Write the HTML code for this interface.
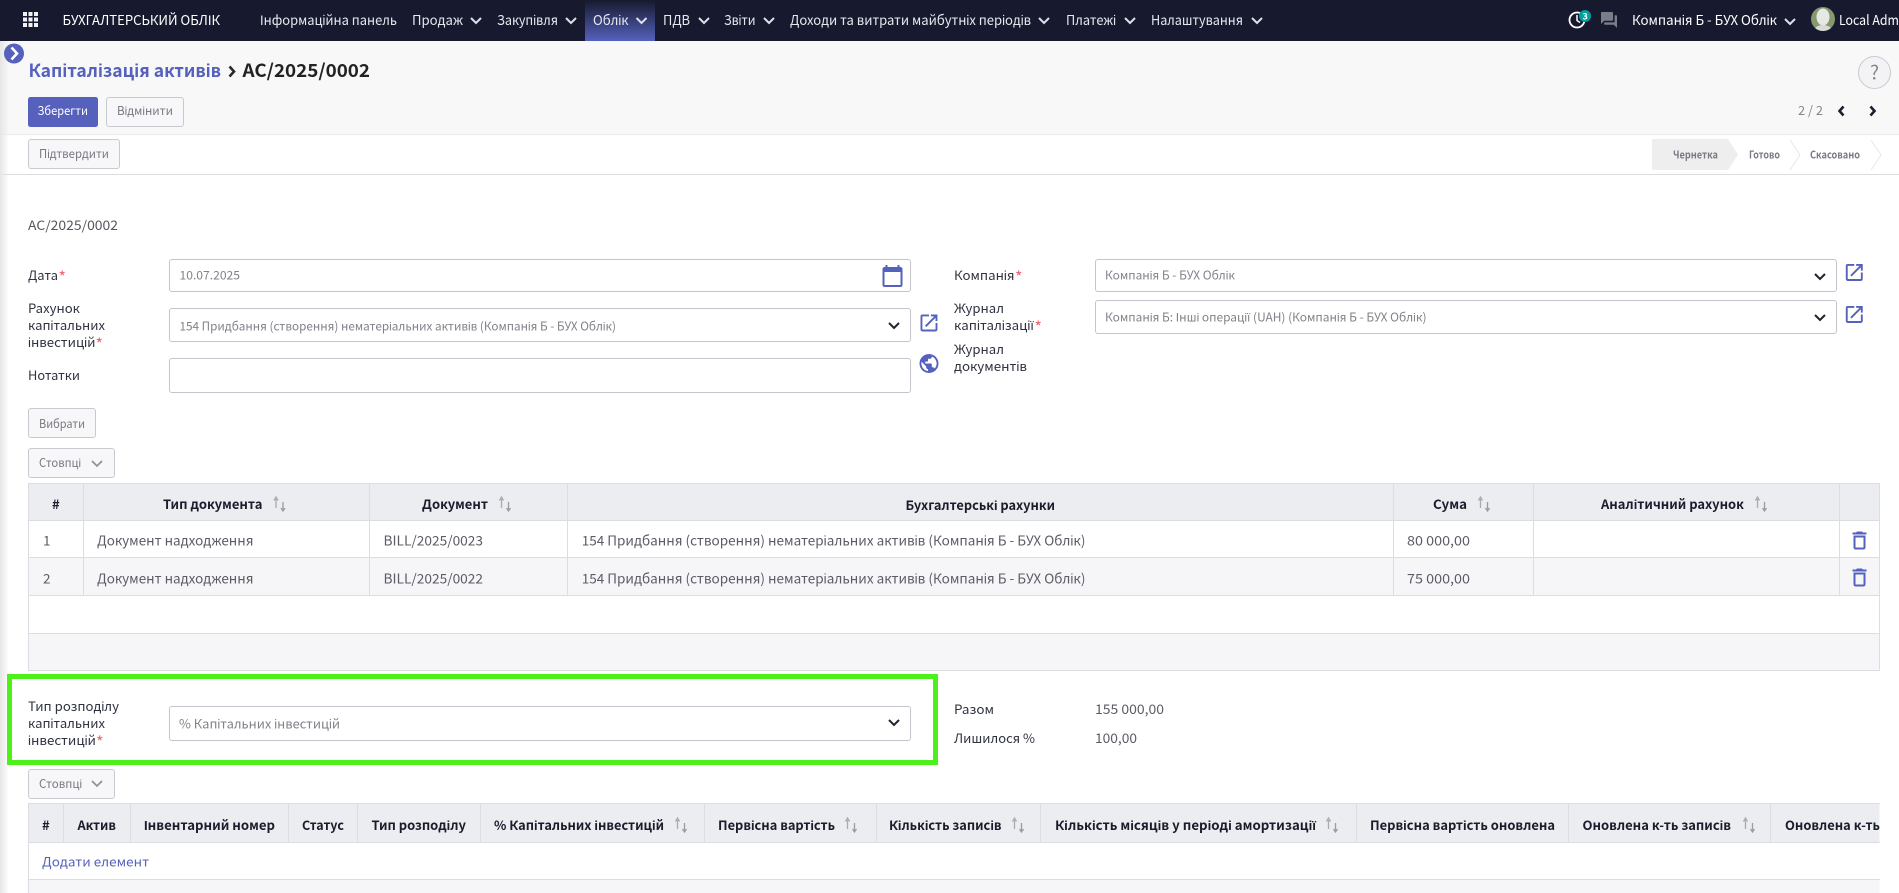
<!DOCTYPE html>
<html lang="uk">
<head>
<meta charset="utf-8">
<title>Капіталізація активів</title>
<style>
html,body{margin:0;padding:0;background:#fff;width:1899px;height:893px;overflow:hidden}
svg{display:block}
text{font-family:"Noto Sans CJK KR","Liberation Sans",sans-serif;font-size:13px;fill:#4a4d57;white-space:pre}
.n{fill:#e6e8f0;font-size:13.5px}
.l{fill:#2f3340;font-size:13px}
.v{fill:#80828a;font-size:12px}
.c{fill:#5a5c66;font-size:13.5px}
.h{fill:#1a1c2c;font-weight:700;font-size:13px}
.b{fill:#777982;font-size:12px}
.s{fill:#787a86;font-size:10.5px;font-weight:700}
.r{fill:#f0626e;font-size:16px}
.box{fill:#fff;stroke:#c4c5cc;stroke-width:1}
.btn{fill:#f7f7f9;stroke:#c9cad0;stroke-width:1}
.ln{stroke:#dcdde2;stroke-width:1;fill:none}
.chv{fill:none;stroke:#dfe1ea;stroke-width:2}
.chd{fill:none;stroke:#20222e;stroke-width:2}
.chg{fill:none;stroke:#8a8c96;stroke-width:1.6}
.ic{fill:#5561bd}
</style>
</head>
<body>
<svg xmlns="http://www.w3.org/2000/svg" width="1899" height="893" viewBox="0 0 1899 893">
<defs>
<linearGradient id="act" x1="0" y1="0" x2="0" y2="1"><stop offset="0" stop-color="#171a2e"/><stop offset="1" stop-color="#5561bd"/></linearGradient>
<linearGradient id="side" x1="0" y1="0" x2="1" y2="0"><stop offset="0" stop-color="#e6e6e6"/><stop offset="1" stop-color="#e6e6e6" stop-opacity="0"/></linearGradient>
<g id="sort"><path d="M2.5 3V12M.5 4.5L2.5 1 4.5 4.5" fill="none" stroke="#a9aab2" stroke-width="1.3"/><path d="M9.5 6V14M7.5 12L9.5 15 11.5 12" fill="none" stroke="#9a9ba3" stroke-width="1.3"/></g>
<path id="ext" class="ic" d="M19 19H5V5h7V3H5a2 2 0 0 0-2 2v14c0 1.1.9 2 2 2h14c1.1 0 2-.9 2-2v-7h-2v7zM14 3v2h3.59l-9.83 9.83 1.41 1.41L19 6.41V10h2V3h-7z"/>
<path id="trash" class="ic" d="M6 19c0 1.1.9 2 2 2h8c1.1 0 2-.9 2-2V7H6v12zM8 9h8v10H8V9zm7.5-5l-1-1h-5l-1 1H5v2h14V4h-3.5z"/>
<clipPath id="clipT"><rect x="28" y="803" width="1851.5" height="90"/></clipPath>
<clipPath id="av"><ellipse cx="1823" cy="19" rx="12" ry="12"/></clipPath>
</defs>

<!-- page backgrounds -->
<rect x="0" y="41" width="1899" height="93" fill="#f8f8f8"/>
<rect x="0" y="134" width="1899" height="40" fill="#fff"/>
<rect x="0" y="134" width="1899" height="1" fill="#ececec"/>
<rect x="0" y="174" width="1899" height="1" fill="#dcdcdc"/>
<rect x="0" y="41" width="9" height="852" fill="url(#side)"/>

<!-- navbar -->
<rect x="0" y="0" width="1899" height="41" fill="#171a2e"/>
<rect x="585" y="0" width="70" height="41" fill="url(#act)"/>
<g fill="#f2f2f6">
<rect x="23" y="12" width="4" height="4"/><rect x="28.5" y="12" width="4" height="4"/><rect x="34" y="12" width="4" height="4"/>
<rect x="23" y="17.5" width="4" height="4"/><rect x="28.5" y="17.5" width="4" height="4"/><rect x="34" y="17.5" width="4" height="4"/>
<rect x="23" y="23" width="4" height="4"/><rect x="28.5" y="23" width="4" height="4"/><rect x="34" y="23" width="4" height="4"/>
</g>
<text class="n" style="fill:#fff" x="62.5" y="25" textLength="157.5" lengthAdjust="spacingAndGlyphs">БУХГАЛТЕРСЬКИЙ ОБЛІК</text>
<text class="n" x="260" y="25" textLength="137" lengthAdjust="spacingAndGlyphs">Інформаційна панель</text>
<text class="n" x="412" y="25" textLength="51" lengthAdjust="spacingAndGlyphs">Продаж</text>
<text class="n" x="497" y="25" textLength="61" lengthAdjust="spacingAndGlyphs">Закупівля</text>
<text class="n" x="593" y="25" textLength="35.6" lengthAdjust="spacingAndGlyphs">Облік</text>
<text class="n" x="663" y="25" textLength="27" lengthAdjust="spacingAndGlyphs">ПДВ</text>
<text class="n" x="724" y="25" textLength="31.5" lengthAdjust="spacingAndGlyphs">Звіти</text>
<text class="n" x="790" y="25" textLength="241" lengthAdjust="spacingAndGlyphs">Доходи та витрати майбутніх періодів</text>
<text class="n" x="1066" y="25" textLength="50" lengthAdjust="spacingAndGlyphs">Платежі</text>
<text class="n" x="1151" y="25" textLength="92" lengthAdjust="spacingAndGlyphs">Налаштування</text>
<path class="chv" d="M471 18l5 5 5-5M566 18l5 5 5-5M636.5 18l5 5 5-5M699 18l5 5 5-5M764 18l5 5 5-5M1039 18l5 5 5-5M1125 18l5 5 5-5M1252 18l5 5 5-5M1785 19l5 5 5-5"/>

<circle cx="1577" cy="20" r="7.5" fill="none" stroke="#fff" stroke-width="1.8"/>
<path d="M1577 15v5.5l3 2" fill="none" stroke="#fff" stroke-width="1.5"/>
<circle cx="1585" cy="16" r="6" fill="#00a09d"/>
<text x="1582.5" y="19.5" style="fill:#fff;font-size:9px;font-weight:700">3</text>
<path transform="translate(1599.4,10.4) scale(.8)" fill="#7c7d8a" d="M21 6h-2v9H6v2c0 .55.45 1 1 1h11l4 4V7c0-.55-.45-1-1-1zm-4 6V3c0-.55-.45-1-1-1H3c-.55 0-1 .45-1 1v14l4-4h10c.55 0 1-.45 1-1z"/>
<text class="n" style="fill:#fff" x="1632" y="25" textLength="145" lengthAdjust="spacingAndGlyphs">Компанія Б - БУХ Облік</text>
<g clip-path="url(#av)">
<rect x="1811" y="7" width="24" height="24" fill="#84996c"/>
<ellipse cx="1823" cy="17" rx="6.5" ry="8.5" fill="#e6e8e6"/>
<ellipse cx="1823" cy="31" rx="9" ry="6" fill="#d8dad8"/>
</g>
<text class="n" style="fill:#fff" x="1839" y="25" textLength="60" lengthAdjust="spacingAndGlyphs">Local Adm</text>

<!-- sidebar toggle -->
<circle cx="14" cy="53.5" r="10" fill="#5561bd"/>
<path d="M11.5 47.5l5.5 6-5.5 6" fill="none" stroke="#fff" stroke-width="2.6"/>

<!-- control panel -->
<text style="fill:#5561bd;font-size:18px;font-weight:700" x="28.5" y="77" textLength="192.5" lengthAdjust="spacingAndGlyphs">Капіталізація активів</text>
<path d="M229.5 66.5l4.5 5-4.5 5" fill="none" stroke="#2a2a2a" stroke-width="2.6"/>
<text style="fill:#222;font-size:18px;font-weight:700" x="242.5" y="77" textLength="127.5" lengthAdjust="spacingAndGlyphs">AC/2025/0002</text>

<rect x="28" y="97" width="70" height="30" rx="2.5" fill="#5561bd"/>
<text style="fill:#fff;font-size:12px" x="37.5" y="115" textLength="50.5" lengthAdjust="spacingAndGlyphs">Зберегти</text>
<rect class="btn" x="106.5" y="97.5" width="77" height="29" rx="2.5"/>
<text class="b" x="117" y="115" textLength="56" lengthAdjust="spacingAndGlyphs">Відмінити</text>

<circle cx="1874.5" cy="72.5" r="16" fill="#f3f3f5" stroke="#c9cad0"/>
<text style="fill:#85868e;font-size:19px" x="1870" y="79.5">?</text>
<text style="fill:#85868e;font-size:12.5px" x="1798" y="115" textLength="25" lengthAdjust="spacingAndGlyphs">2 / 2</text>
<path d="M1843.5 106.5l-4 4.5 4 4.5M1870.5 106.5l4 4.5-4 4.5" fill="none" stroke="#1c1e2e" stroke-width="2.6"/>

<!-- status bar -->
<rect class="btn" x="28.5" y="139.5" width="91" height="29" rx="2.5"/>
<text class="b" x="39" y="158" textLength="70" lengthAdjust="spacingAndGlyphs">Підтвердити</text>
<path d="M1654 139H1728L1738 154.5 1728 170H1654a2 2 0 0 1-2-2V141a2 2 0 0 1 2-2z" fill="#eeeeee"/>
<path d="M1790 140l10 15-10 15M1871 140l10 15-10 15" fill="none" stroke="#e6e7ea"/>
<text class="s" x="1673" y="158.5" textLength="45" lengthAdjust="spacingAndGlyphs">Чернетка</text>
<text class="s" x="1749" y="158.5" textLength="31" lengthAdjust="spacingAndGlyphs">Готово</text>
<text class="s" x="1810" y="158.5" textLength="50" lengthAdjust="spacingAndGlyphs">Скасовано</text>

<!-- form -->
<text class="l" style="fill:#55575f" x="28" y="230" textLength="90" lengthAdjust="spacingAndGlyphs">AC/2025/0002</text>

<text class="l" x="28" y="280" textLength="30" lengthAdjust="spacingAndGlyphs">Дата</text><text class="r" x="58.5" y="283">*</text>
<rect class="box" x="169.5" y="259.5" width="741" height="32" rx="2.5"/>
<text class="v" x="179.5" y="279.5" textLength="60.5" lengthAdjust="spacingAndGlyphs">10.07.2025</text>
<path class="ic" transform="translate(880.5,264)" d="M20 3h-1V1h-2v2H7V1H5v2H4c-1.1 0-2 .9-2 2v16c0 1.1.9 2 2 2h16c1.1 0 2-.9 2-2V5c0-1.1-.9-2-2-2zm0 18H4V8h16v13z"/>

<text class="l" x="28" y="313" textLength="52" lengthAdjust="spacingAndGlyphs">Рахунок</text>
<text class="l" x="28" y="330" textLength="77" lengthAdjust="spacingAndGlyphs">капітальних</text>
<text class="l" x="28" y="347" textLength="67.5" lengthAdjust="spacingAndGlyphs">інвестицій</text><text class="r" x="95.5" y="350">*</text>
<rect class="box" x="169.5" y="308.5" width="741" height="33" rx="2.5"/>
<text class="v" x="179.5" y="330.5" textLength="436.5" lengthAdjust="spacingAndGlyphs">154 Придбання (створення) нематеріальних активів (Компанія Б - БУХ Облік)</text>
<path class="chd" d="M889 323l5 5 5-5"/>
<use href="#ext" transform="translate(917.7,311.7) scale(.94)"/>

<text class="l" x="28" y="380" textLength="52" lengthAdjust="spacingAndGlyphs">Нотатки</text>
<rect class="box" x="169.5" y="358.5" width="741" height="34" rx="2.5"/>
<path class="ic" transform="translate(917.6,352.1) scale(.95)" d="M12 2C6.48 2 2 6.48 2 12s4.48 10 10 10 10-4.48 10-10S17.52 2 12 2zm-1 17.93c-3.95-.49-7-3.85-7-7.93 0-.62.08-1.21.21-1.79L9 15v1c0 1.1.9 2 2 2v1.93zm6.9-2.54c-.26-.81-1-1.39-1.9-1.39h-1v-3c0-.55-.45-1-1-1H8v-2h2c.55 0 1-.45 1-1V7h2c1.1 0 2-.9 2-2v-.41c2.93 1.19 5 4.06 5 7.41 0 2.08-.8 3.97-2.1 5.39z"/>

<text class="l" x="954" y="280" textLength="60.5" lengthAdjust="spacingAndGlyphs">Компанія</text><text class="r" x="1015" y="283">*</text>
<rect class="box" x="1095.5" y="259.5" width="741" height="32" rx="2.5"/>
<text class="v" x="1105" y="279.5" textLength="130" lengthAdjust="spacingAndGlyphs">Компанія Б - БУХ Облік</text>
<path class="chd" d="M1815 274l5 5 5-5"/>
<use href="#ext" transform="translate(1843,261.2) scale(.94)"/>

<text class="l" x="954" y="313" textLength="50" lengthAdjust="spacingAndGlyphs">Журнал</text>
<text class="l" x="954" y="330" textLength="80" lengthAdjust="spacingAndGlyphs">капіталізації</text><text class="r" x="1034.5" y="333">*</text>
<rect class="box" x="1095.5" y="300.5" width="741" height="33" rx="2.5"/>
<text class="v" x="1105" y="321.5" textLength="321.5" lengthAdjust="spacingAndGlyphs">Компанія Б: Інші операції (UAH) (Компанія Б - БУХ Облік)</text>
<path class="chd" d="M1815 315l5 5 5-5"/>
<use href="#ext" transform="translate(1843,303.2) scale(.94)"/>

<text class="l" x="954" y="354" textLength="50" lengthAdjust="spacingAndGlyphs">Журнал</text>
<text class="l" x="954" y="371" textLength="73" lengthAdjust="spacingAndGlyphs">документів</text>

<rect class="btn" x="28.5" y="408.5" width="67" height="29" rx="2.5"/>
<text class="b" x="39" y="428" textLength="46" lengthAdjust="spacingAndGlyphs">Вибрати</text>
<rect class="btn" x="28.5" y="448.5" width="86" height="29" rx="2.5"/>
<text class="b" x="39" y="467" textLength="42" lengthAdjust="spacingAndGlyphs">Стовпці</text>
<path class="chg" d="M92 461l5 5 5-5"/>

<!-- table 1 -->
<rect x="28" y="483" width="1851.5" height="38" fill="#ecedf0"/>
<rect x="28" y="558" width="1851.5" height="37.5" fill="#f6f6f8"/>
<rect x="28" y="633" width="1851.5" height="38" fill="#f6f6f8"/>
<path class="ln" d="M28.5 483.5H1879.5V670.5H28.5ZM28 520.5H1880M28 557.5H1880M28 595.5H1880M28 633.5H1880M83.5 483V596M369.5 483V596M567.5 483V596M1393.5 483V596M1533.5 483V596M1839.5 483V596"/>
<text class="h" x="52" y="509" textLength="8">#</text>
<text class="h" x="163" y="509" textLength="99.5" lengthAdjust="spacingAndGlyphs">Тип документа</text>
<use href="#sort" x="273.5" y="496"/>
<text class="h" x="422" y="509" textLength="66" lengthAdjust="spacingAndGlyphs">Документ</text>
<use href="#sort" x="499" y="496"/>
<text class="h" x="905.5" y="510" textLength="149.5" lengthAdjust="spacingAndGlyphs">Бухгалтерські рахунки</text>
<text class="h" x="1433" y="509" textLength="34" lengthAdjust="spacingAndGlyphs">Сума</text>
<use href="#sort" x="1478" y="496"/>
<text class="h" x="1601" y="509" textLength="143" lengthAdjust="spacingAndGlyphs">Аналітичний рахунок</text>
<use href="#sort" x="1755" y="496"/>

<text class="c" x="43" y="545.5">1</text>
<text class="c" x="97" y="545.5" textLength="156.5" lengthAdjust="spacingAndGlyphs">Документ надходження</text>
<text class="c" x="383.5" y="545.5" textLength="99.5" lengthAdjust="spacingAndGlyphs">BILL/2025/0023</text>
<text class="c" x="581.7" y="545.5" textLength="503.8" lengthAdjust="spacingAndGlyphs">154 Придбання (створення) нематеріальних активів (Компанія Б - БУХ Облік)</text>
<text class="c" x="1407" y="545.5" textLength="63" lengthAdjust="spacingAndGlyphs">80 000,00</text>
<use href="#trash" transform="translate(1847.5,528.5)"/>

<text class="c" x="43" y="583.5">2</text>
<text class="c" x="97" y="583.5" textLength="156.5" lengthAdjust="spacingAndGlyphs">Документ надходження</text>
<text class="c" x="383.5" y="583.5" textLength="99.5" lengthAdjust="spacingAndGlyphs">BILL/2025/0022</text>
<text class="c" x="581.7" y="583.5" textLength="503.8" lengthAdjust="spacingAndGlyphs">154 Придбання (створення) нематеріальних активів (Компанія Б - БУХ Облік)</text>
<text class="c" x="1407" y="583.5" textLength="63" lengthAdjust="spacingAndGlyphs">75 000,00</text>
<use href="#trash" transform="translate(1847.5,565.5)"/>

<!-- highlighted field -->
<rect x="9.5" y="676.5" width="926" height="86" fill="#fff" stroke="#4cf01a" stroke-width="5"/>
<text class="l" x="28" y="711" textLength="91" lengthAdjust="spacingAndGlyphs">Тип розподілу</text>
<text class="l" x="28" y="728" textLength="77" lengthAdjust="spacingAndGlyphs">капітальних</text>
<text class="l" x="28" y="745" textLength="68" lengthAdjust="spacingAndGlyphs">інвестицій</text><text class="r" x="96" y="748">*</text>
<rect class="box" x="169.5" y="706.5" width="741" height="34" rx="2.5"/>
<text class="v" style="font-size:13px" x="179" y="728.5" textLength="161" lengthAdjust="spacingAndGlyphs">% Капітальних інвестицій</text>
<path class="chd" d="M889 720l5 5 5-5"/>

<text class="l" x="954" y="714" textLength="40" lengthAdjust="spacingAndGlyphs">Разом</text>
<text class="c" x="1095" y="714" textLength="69" lengthAdjust="spacingAndGlyphs">155 000,00</text>
<text class="l" x="954" y="743" textLength="81" lengthAdjust="spacingAndGlyphs">Лишилося %</text>
<text class="c" x="1095" y="743" textLength="42" lengthAdjust="spacingAndGlyphs">100,00</text>

<rect class="btn" x="28.5" y="769.5" width="86" height="29" rx="2.5"/>
<text class="b" x="39" y="788" textLength="43" lengthAdjust="spacingAndGlyphs">Стовпці</text>
<path class="chg" d="M92 781l5 5 5-5"/>

<!-- table 2 -->
<rect x="28" y="803" width="1851.5" height="39" fill="#ecedf0"/>
<rect x="28" y="879" width="1851.5" height="14" fill="#f6f6f8"/>
<path class="ln" d="M28 803.5H1880M28 842.5H1880M28 879.5H1880M28.5 803V893M63.5 803V842M130.5 803V842M288.5 803V842M357.5 803V842M480.5 803V842M704.5 803V842M876.5 803V842M1040.5 803V842M1356.5 803V842M1568.5 803V842M1770.5 803V842"/>
<g clip-path="url(#clipT)">
<text class="h" x="42" y="830" textLength="8">#</text>
<text class="h" x="77.5" y="830" textLength="38.5" lengthAdjust="spacingAndGlyphs">Актив</text>
<text class="h" x="144" y="830" textLength="131" lengthAdjust="spacingAndGlyphs">Інвентарний номер</text>
<text class="h" x="302" y="830" textLength="42" lengthAdjust="spacingAndGlyphs">Статус</text>
<text class="h" x="371.5" y="830" textLength="94.5" lengthAdjust="spacingAndGlyphs">Тип розподілу</text>
<text class="h" x="494" y="830" textLength="170" lengthAdjust="spacingAndGlyphs">% Капітальних інвестицій</text>
<use href="#sort" x="675" y="817"/>
<text class="h" x="718" y="830" textLength="117" lengthAdjust="spacingAndGlyphs">Первісна вартість</text>
<use href="#sort" x="845" y="817"/>
<text class="h" x="889" y="830" textLength="112.5" lengthAdjust="spacingAndGlyphs">Кількість записів</text>
<use href="#sort" x="1012" y="817"/>
<text class="h" x="1055" y="830" textLength="261" lengthAdjust="spacingAndGlyphs">Кількість місяців у періоді амортизації</text>
<use href="#sort" x="1326" y="817"/>
<text class="h" x="1370" y="830" textLength="185" lengthAdjust="spacingAndGlyphs">Первісна вартість оновлена</text>
<text class="h" x="1582.5" y="830" textLength="148.5" lengthAdjust="spacingAndGlyphs">Оновлена к-ть записів</text>
<use href="#sort" x="1743" y="817"/>
<text class="h" x="1785" y="830" textLength="95" lengthAdjust="spacingAndGlyphs">Оновлена к-ть</text>
</g>
<text style="fill:#5561bd;font-size:13px" x="42" y="866.5" textLength="107" lengthAdjust="spacingAndGlyphs">Додати елемент</text>
</svg>
</body>
</html>
